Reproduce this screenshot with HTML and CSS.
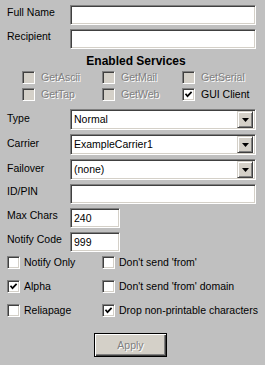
FILE: index.html
```html
<!DOCTYPE html>
<html lang="en">
<head>
    <meta charset="UTF-8">
    <title>Pager Settings</title>
    <link rel="stylesheet" href="styles.css">
</head>
<body>
<div id="settings-panel">
    <div class="form-row">
        <label class="field-label">Full Name</label>
        <span class="text-field wide"></span>
    </div>
    <div class="form-row">
        <label class="field-label">Recipient</label>
        <span class="text-field wide"></span>
    </div>

    <div class="section-title">Enabled Services</div>
    <div class="service-grid">
        <span class="check-item disabled"><span class="check-box"></span>GetAscii</span>
        <span class="check-item disabled"><span class="check-box"></span>GetMail</span>
        <span class="check-item disabled"><span class="check-box"></span>GetSerial</span>
        <span class="check-item disabled"><span class="check-box"></span>GetTap</span>
        <span class="check-item disabled"><span class="check-box"></span>GetWeb</span>
        <span class="check-item"><span class="check-box checked"><svg viewBox="0 0 9 9" width="9" height="9"><polyline points="1.5,3.8 3.5,6.2 7.6,1.8" fill="none" stroke="#000" stroke-width="1.7"/></svg></span>GUI Client</span>
    </div>

    <div class="form-row select-row first-select">
        <label class="field-label">Type</label>
        <span class="select-field"><span class="select-value">Normal</span><span class="drop-button"><svg viewBox="0 0 7 4" width="7" height="4"><polygon points="0,0 7,0 3.5,4" fill="#000"/></svg></span></span>
    </div>
    <div class="form-row select-row">
        <label class="field-label">Carrier</label>
        <span class="select-field"><span class="select-value">ExampleCarrier1</span><span class="drop-button"><svg viewBox="0 0 7 4" width="7" height="4"><polygon points="0,0 7,0 3.5,4" fill="#000"/></svg></span></span>
    </div>
    <div class="form-row select-row">
        <label class="field-label">Failover</label>
        <span class="select-field"><span class="select-value">(none)</span><span class="drop-button"><svg viewBox="0 0 7 4" width="7" height="4"><polygon points="0,0 7,0 3.5,4" fill="#000"/></svg></span></span>
    </div>
    <div class="form-row">
        <label class="field-label">ID/PIN</label>
        <span class="text-field wide"></span>
    </div>
    <div class="form-row">
        <label class="field-label">Max Chars</label>
        <span class="text-field short">240</span>
    </div>
    <div class="form-row">
        <label class="field-label">Notify Code</label>
        <span class="text-field short">999</span>
    </div>

    <div class="option-grid">
        <span class="option-item"><span class="check-box"></span>Notify Only</span>
        <span class="option-item"><span class="check-box"></span>Don't send 'from'</span>
        <span class="option-item"><span class="check-box checked"><svg viewBox="0 0 9 9" width="9" height="9"><polyline points="1.5,3.8 3.5,6.2 7.6,1.8" fill="none" stroke="#000" stroke-width="1.7"/></svg></span>Alpha</span>
        <span class="option-item"><span class="check-box"></span>Don't send 'from' domain</span>
        <span class="option-item"><span class="check-box"></span>Reliapage</span>
        <span class="option-item"><span class="check-box checked"><svg viewBox="0 0 9 9" width="9" height="9"><polyline points="1.5,3.8 3.5,6.2 7.6,1.8" fill="none" stroke="#000" stroke-width="1.7"/></svg></span>Drop non-printable characters</span>
    </div>

    <div class="button-bar">
        <span class="apply-button">Apply</span>
    </div>
</div>
</body>
</html>
```

FILE: styles.css
```css
body {
    margin: 0;
    padding: 0;
    background: #c0c0c0;
    font-family: "Liberation Sans", Arial, sans-serif;
    font-size: 10.5px;
    line-height: 13px;
    color: #000;
}
#settings-panel {
    width: 265px;
    height: 365px;
    box-sizing: border-box;
    padding: 5px 0 0 7px;
}
.form-row {
    display: flex;
    align-items: flex-start;
    margin-bottom: 4px;
}
.field-label {
    width: 63px;
    flex: none;
    padding-top: 1px;
}
.text-field,
.select-field {
    display: flex;
    align-items: center;
    box-sizing: border-box;
    height: 20px;
    padding: 0 3px;
    background: #fff;
    border: 1px solid;
    border-color: #808080 #fff #fff #808080;
    box-shadow: inset 1px 1px #404040, inset -1px -1px #d4d0c8;
}
.text-field.wide {
    width: 186px;
}
.text-field.short {
    width: 50px;
}
.section-title {
    margin: 5px 0 3px 0;
    text-align: center;
    font-weight: bold;
    font-size: 12px;
    line-height: 14px;
    width: 258px;
}
.service-grid {
    display: grid;
    grid-template-columns: 80px 80px 80px;
    row-gap: 4px;
    padding-left: 15px;
    margin-bottom: 8px;
}
.check-item,
.option-item {
    display: flex;
    align-items: center;
    height: 13px;
    white-space: nowrap;
}
.check-item .check-box {
    margin-right: 6px;
}
.option-item .check-box {
    margin-right: 4px;
}
.check-box {
    display: inline-flex;
    align-items: center;
    justify-content: center;
    box-sizing: border-box;
    width: 13px;
    height: 13px;
    flex: none;
    background: #fff;
    border: 1px solid;
    border-color: #808080 #fff #fff #808080;
    box-shadow: inset 1px 1px #404040, inset -1px -1px #d4d0c8;
}
.check-item.disabled {
    color: #808080;
    text-shadow: 1px 1px 0 #fff;
}
.check-item.disabled .check-box {
    background: #d4d0c8;
}
.select-row {
    margin-bottom: 4px;
}
.select-row .field-label {
    padding-top: 3px;
}
.select-field {
    width: 186px;
    height: 21px;
    padding: 0 2px 0 3px;
    justify-content: space-between;
}
.drop-button {
    display: flex;
    align-items: center;
    justify-content: center;
    box-sizing: border-box;
    width: 16px;
    height: 17px;
    background: #d4d0c8;
    border: 1px solid;
    border-color: #d4d0c8 #404040 #404040 #d4d0c8;
    box-shadow: inset 1px 1px #fff, inset -1px -1px #808080;
}
.option-grid {
    display: grid;
    grid-template-columns: 95px 158px;
    row-gap: 11px;
    margin-top: 1px;
}
.button-bar {
    padding: 16px 0 0 87px;
}
.apply-button {
    display: flex;
    align-items: center;
    justify-content: center;
    box-sizing: border-box;
    width: 73px;
    height: 24px;
    background: #d4d0c8;
    border: 1px solid #000;
    box-shadow: inset 1px 1px #fff, inset -1px -1px #404040, inset -2px -2px #808080;
    color: #808080;
    text-shadow: 1px 1px 0 #fff;
}
```
